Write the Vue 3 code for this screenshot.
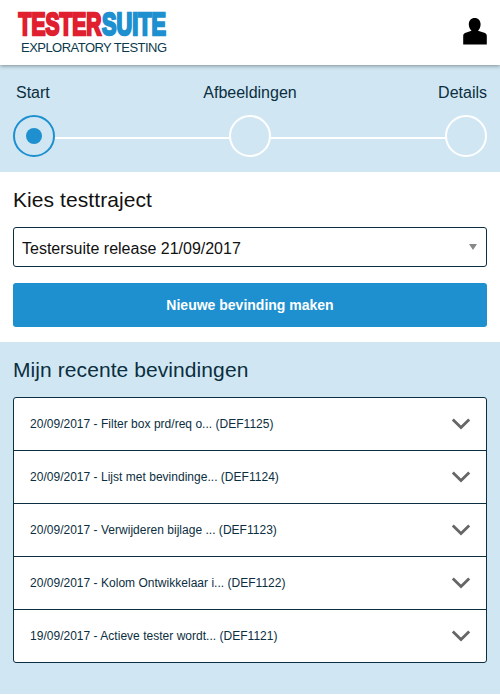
<template>
  <div class="page">

    <header class="topbar">
      <svg class="logo" width="156" height="60" viewBox="0 0 156 60">
        <text class="logo-name logo-red" x="1.600" y="35.300" textLength="82.800" lengthAdjust="spacingAndGlyphs">TESTER</text>
        <text class="logo-name logo-blue" x="85" y="35.300" textLength="64" lengthAdjust="spacingAndGlyphs">SUITE</text>
        <text class="logo-sub" x="4" y="52" textLength="146">EXPLORATORY TESTING</text>
      </svg>
      <button class="user-btn" aria-label="Profiel">
        <svg width="24" height="28" viewBox="0 0 24 28">
          <path d="M11.700 0C15.300 0 17.600 2.600 17.600 6.300c0 2.800-1.100 5.200-2.600 6.500l6.300 1.900c1.700.6 2.500 1.600 2.500 3.200v8.600H.2v-8.600c0-1.600.8-2.600 2.500-3.200L8.500 12.800C7 11.500 5.800 9.100 5.800 6.300 5.800 2.600 8.100 0 11.700 0z" />
        </svg>
      </button>
    </header>

    <nav class="stepper">
      <div class="step-labels">
        <span v-for="step in steps" :key="step">{{ step }}</span>
      </div>
      <div class="step-track">
        <template v-for="(step, index) in steps" :key="step">
          <span v-if="index > 0" class="step-line"></span>
          <span class="step-circle" :class="{ active: index === currentStep }"></span>
        </template>
      </div>
    </nav>

    <section class="project">
      <h2>Kies testtraject</h2>
      <div class="select-box">
        <span>{{ project }}</span>
        <svg width="8" height="6" viewBox="0 0 8 6"><path d="M0 0h8L4 6z" /></svg>
      </div>
      <button class="new-btn">Nieuwe bevinding maken</button>
    </section>

    <section class="recent">
      <h2>Mijn recente bevindingen</h2>
      <ul class="finding-list">
        <li v-for="item in findings" :key="item.code" @click="toggle(item.code)">
          <span class="finding-text">{{ item.date }} - {{ item.title }} ({{ item.code }})</span>
          <svg class="chevron" :class="{ open: opened === item.code }" width="20" height="12" viewBox="0 0 20 12">
            <path d="M1.800 1.500l8.200 8 8.200-8" />
          </svg>
        </li>
      </ul>
    </section>

  </div>
</template>

<script setup>
import { ref } from 'vue';

const steps = ['Start', 'Afbeeldingen', 'Details'];
const currentStep = ref(0);
const project = ref('Testersuite release 21/09/2017');
const opened = ref('');

const findings = [
  { date: '20/09/2017', title: 'Filter box prd/req o...', code: 'DEF1125' },
  { date: '20/09/2017', title: 'Lijst met bevindinge...', code: 'DEF1124' },
  { date: '20/09/2017', title: 'Verwijderen bijlage ...', code: 'DEF1123' },
  { date: '20/09/2017', title: 'Kolom Ontwikkelaar i...', code: 'DEF1122' },
  { date: '19/09/2017', title: 'Actieve tester wordt...', code: 'DEF1121' }
];

const toggle = (code) => {
  opened.value = opened.value === code ? '' : code;
};
</script>

<style>
body {
  margin: 0;
  background: #fff;
}
</style>

<style scoped>
.page {
  font-family: "Liberation Sans", Arial, sans-serif;
  color: #0b2e40;
  min-height: 694px;
  background: #d0e7f3;
}
.page * {
  box-sizing: border-box;
}
h2 {
  margin: 0;
  font-size: 21px;
  line-height: 24px;
  font-weight: 400;
  letter-spacing: 0.08px;
}

/* Header */
.topbar {
  position: relative;
  height: 65px;
  padding: 0 13px 0 17px;
  display: flex;
  justify-content: space-between;
  align-items: flex-start;
  background: #fff;
  box-shadow: 0 1px 4px rgba(0, 0, 0, 0.4);
}
.logo {
  overflow: visible;
}
.logo-name {
  font-family: "Liberation Sans", Arial, sans-serif;
  font-size: 31.500px;
  font-weight: 700;
  stroke-width: 2.500px;
}
.logo-red {
  fill: #e0202f;
  stroke: #e0202f;
}
.logo-blue {
  fill: #1e90cf;
  stroke: #1e90cf;
}
.logo-sub {
  font-size: 13px;
  fill: #0b3a4c;
}
.user-btn {
  margin-top: 18px;
  padding: 0;
  border: none;
  background: none;
  line-height: 0;
  cursor: pointer;
}

/* Stepper */
.stepper {
  height: 107px;
  padding: 18px 13px 0;
}
.step-labels {
  display: grid;
  grid-template-columns: 1fr auto 1fr;
  line-height: 20px;
  font-size: 16px;
}
.step-labels span:first-child {
  padding-left: 3px;
}
.step-labels span:last-child {
  text-align: right;
}
.step-track {
  display: flex;
  align-items: center;
  margin-top: 12px;
}
.step-circle {
  width: 42px;
  height: 42px;
  border: 2px solid #fff;
  border-radius: 50%;
  display: flex;
  align-items: center;
  justify-content: center;
}
.step-circle.active {
  border-color: #1e90cf;
}
.step-circle.active::after {
  content: '';
  width: 16px;
  height: 16px;
  border-radius: 50%;
  background: #1e90cf;
}
.step-line {
  flex: 1;
  height: 2px;
  margin-top: 4px;
  background: #fff;
}

/* Project */
.project {
  height: 170px;
  padding: 16px 13px 0;
  background: #fff;
  color: #111;
}
.select-box {
  height: 40px;
  margin-top: 15px;
  padding: 3px 9px 0 8px;
  display: flex;
  justify-content: space-between;
  align-items: center;
  border: 1px solid #0b2e40;
  border-radius: 3px;
  font-size: 16px;
}
.select-box svg {
  fill: #888;
  margin-bottom: 4px;
}
.new-btn {
  display: block;
  width: 100%;
  height: 44px;
  margin-top: 16px;
  border: none;
  border-radius: 3px;
  background: #1e90cf;
  color: #fff;
  font-family: inherit;
  font-size: 14px;
  font-weight: 700;
  cursor: pointer;
}

/* Recent findings */
.recent {
  padding: 16px 13px 31px;
}
.finding-list {
  margin: 15px 0 0;
  padding: 0;
  list-style: none;
  background: #fff;
  border: 1px solid #0b2e40;
  border-radius: 3px;
}
.finding-list li {
  height: 53px;
  padding: 0 15px 0 16px;
  display: flex;
  justify-content: space-between;
  align-items: center;
  border-bottom: 1px solid #0b2e40;
  cursor: pointer;
}
.finding-list li:last-child {
  height: 52px;
  border-bottom: none;
}
.finding-text {
  font-size: 12px;
  letter-spacing: 0.02px;
}
.chevron {
  fill: none;
  stroke: #666;
  stroke-width: 2.800;
}
.chevron.open {
  transform: rotate(180deg);
}
</style>
